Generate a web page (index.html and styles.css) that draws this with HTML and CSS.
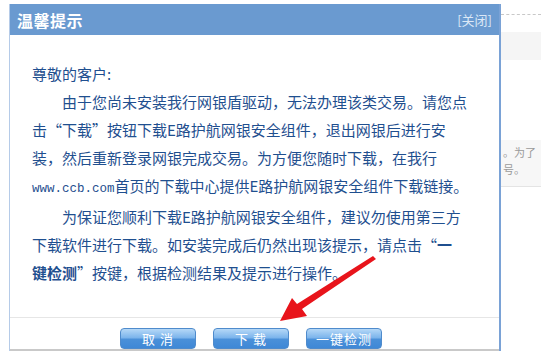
FILE: index.html
```html
<!DOCTYPE html>
<html lang="zh">
<head>
<meta charset="utf-8">
<link rel="stylesheet" href="styles.css">
</head>
<body>
<div class="page">
  <div class="gutter"></div>
  <div class="dialog">
    <div class="header">
      <span class="title">温馨提示</span>
      <span class="close">[关闭]</span>
    </div>
    <div class="content">
      <p class="line">尊敬的客户:</p>
      <p class="para">由于您尚未安装我行网银盾驱动，无法办理该类交易。请您点<br>击“下载”按钮下载E路护航网银安全组件，退出网银后进行安<br>装，然后重新登录网银完成交易。为方便您随时下载，在我行<br><span class="mono">www.ccb.com</span>首页的下载中心提供E路护航网银安全组件下载链接。</p>
      <p class="para">为保证您顺利下载E路护航网银安全组件，建议勿使用第三方<br>下载软件进行下载。如安装完成后仍然出现该提示，请点击“<b>一</b><br><b>键检测</b>”按键，根据检测结果及提示进行操作。</p>
    </div>
    <div class="footer">
      <button class="btn">取 消</button>
      <button class="btn">下 载</button>
      <button class="btn">一键检测</button>
    </div>
  </div>
  <div class="side">
    <div class="dash"></div>
    <div class="greybox"></div>
    <div class="sidetext">
      <div class="st1">。为了</div>
      <div class="st2">号。</div>
    </div>
  </div>
  <svg class="arrow" width="541" height="351" viewBox="0 0 541 351">
    <polygon points="373,256 376,259 302,309 307,316 280,321 292,298 297,304" fill="#e8141b"/>
  </svg>
</div>
</body>
</html>
```

FILE: styles.css
```css
html, body {
  margin: 0;
  padding: 0;
  background: #fff;
}
.page {
  position: relative;
  display: flex;
  width: 541px;
  height: 351px;
  overflow: hidden;
  font-family: "Noto Sans CJK SC", "Noto Sans", sans-serif;
}
.gutter {
  width: 9px;
  flex: none;
}
.dialog {
  width: 489px;
  flex: none;
  margin-top: 4px;
  border-left: 1px solid #b5cbe8;
  border-right: 2px solid #7aa2d6;
  display: flex;
  flex-direction: column;
  background: #fff;
}
.header {
  height: 31px;
  background: #6a9ad0;
  display: flex;
  align-items: center;
  justify-content: space-between;
  padding: 0 7px 0 7px;
  flex: none;
}
.title {
  color: #fff;
  font-size: 16px;
  font-weight: bold;
  letter-spacing: 0.5px;
}
.close {
  color: #dce8f6;
  font-size: 13px;
}
.content {
  padding: 25px 0 0 22px;
  color: #1f4f8f;
  font-size: 15px;
  line-height: 28px;
  height: 257px;
  flex: none;
}
.content p {
  margin: 0;
  white-space: nowrap;
}
.para {
  text-indent: 30px;
}
.para b {
  font-weight: bold;
}
.mono {
  font-family: "Liberation Mono", monospace;
  font-size: 12.5px;
}
.footer {
  border-top: 1px solid #e6e6e6;
  display: flex;
  gap: 17px;
  padding: 10px 0 0 110px;
  flex: 1;
  border-bottom: 2px solid #c9c9c9;
}
.btn {
  width: 76px;
  height: 21px;
  padding: 0;
  border: 1px solid #4f8bcc;
  border-radius: 4px;
  background: linear-gradient(#b5d8f7 0%, #7db5ec 45%, #4a90d9 55%, #3f88d6 100%);
  color: #fff;
  font-family: "Noto Sans CJK SC", sans-serif;
  font-size: 13px;
  letter-spacing: 1px;
  line-height: 19px;
}
.side {
  flex: 1;
  position: relative;
}
.dash {
  margin-top: 14px;
  border-top: 1px dashed #c8c8c8;
}
.greybox {
  margin-top: 17px;
  height: 28px;
  background: #f5f5f5;
}
.sidetext {
  margin-top: 80px;
  background: #f7f7f7;
  padding: 4px 0 8px 2px;
  color: #9a9a9a;
  font-size: 11px;
  line-height: 17px;
  border-bottom: 1px solid #e4e4e4;
  white-space: nowrap;
}
.arrow {
  position: absolute;
  left: 0;
  top: 0;
  pointer-events: none;
}
```
